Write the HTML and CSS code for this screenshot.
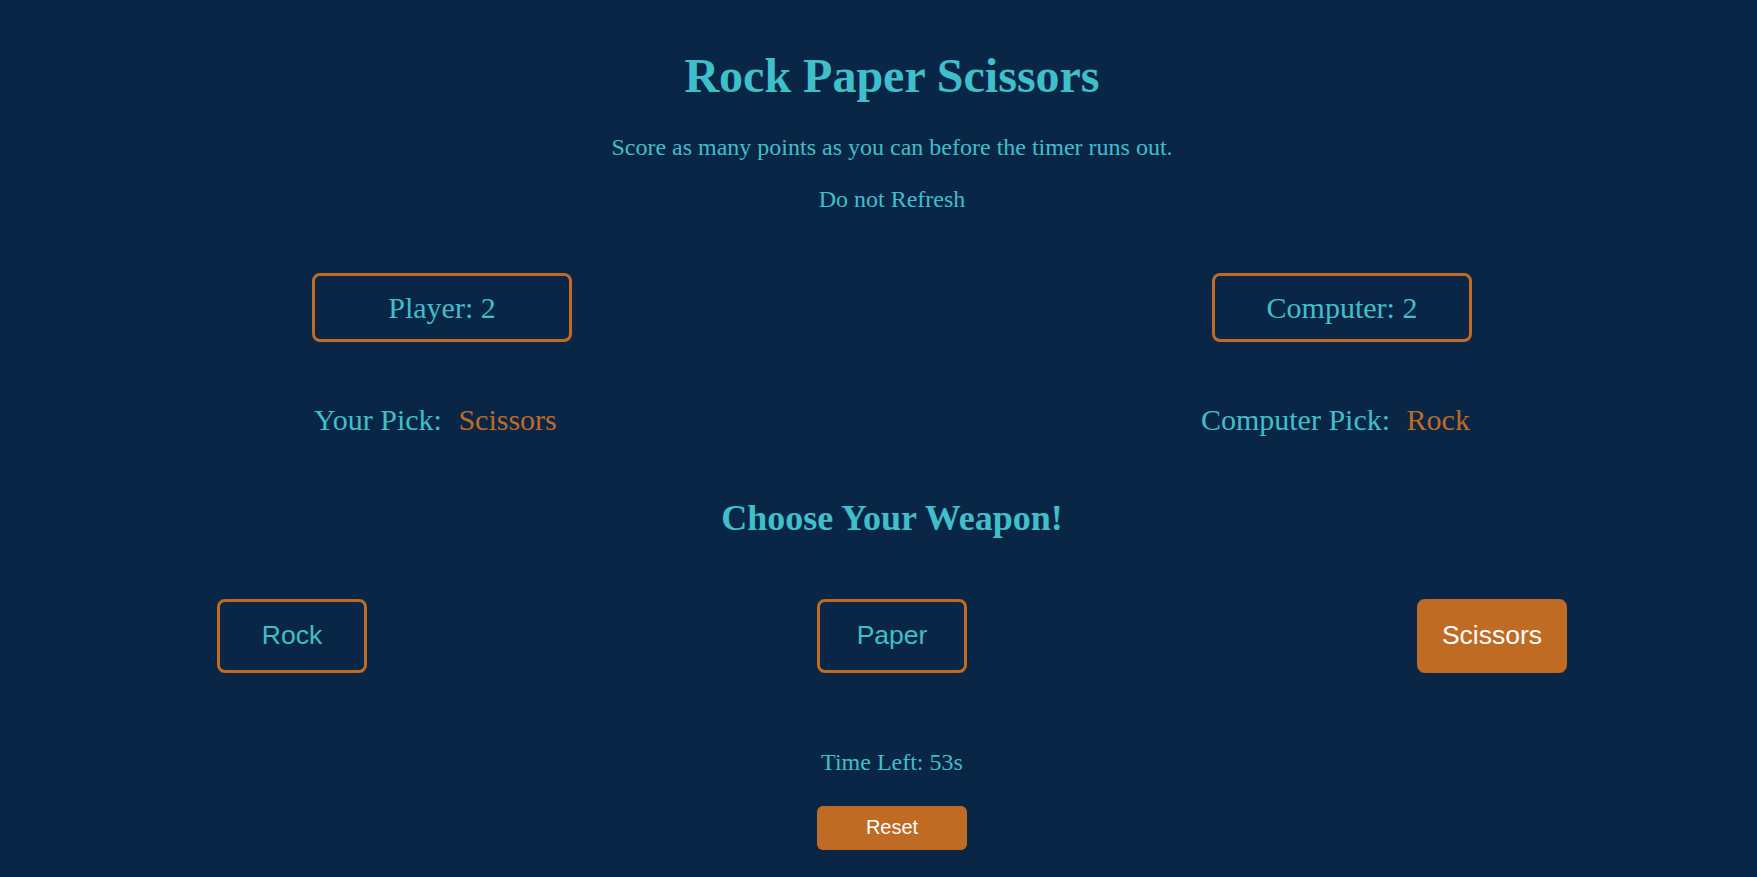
FILE: index.html
```html
<!DOCTYPE html>
<html lang="en">
<head>
<meta charset="utf-8">
<title>Rock Paper Scissors</title>
<link rel="stylesheet" href="styles.css">
</head>
<body>
<main class="page">
  <h1 class="title">Rock Paper Scissors</h1>
  <p class="subtitle">Score as many points as you can before the timer runs out.</p>
  <p class="warning">Do not Refresh</p>

  <section class="row scores">
    <div class="score-box">Player: 2</div>
    <div class="score-box">Computer: 2</div>
  </section>

  <section class="row picks">
    <div class="pick">Your Pick: <span class="pick-value">Scissors</span></div>
    <div class="pick">Computer Pick: <span class="pick-value">Rock</span></div>
  </section>

  <h2 class="choose">Choose Your Weapon!</h2>

  <section class="row weapons">
    <button class="weapon">Rock</button>
    <button class="weapon">Paper</button>
    <button class="weapon selected">Scissors</button>
  </section>

  <p class="timer">Time Left: 53s</p>
  <button class="reset">Reset</button>
</main>
</body>
</html>
```
FILE: styles.css
```css
html, body {
  margin: 0;
  padding: 0;
  overflow: hidden;
  background: #0a2647;
}

body {
  font-family: "Liberation Serif", "Times New Roman", serif;
  color: #3fbfca;
}

.page {
  width: 1800px;
  margin-left: -8px;
  display: flex;
  flex-direction: column;
  align-items: center;
  text-align: center;
}

.title {
  font-size: 48px;
  line-height: 56px;
  font-weight: bold;
  margin: 48px 0 0;
}

.subtitle {
  font-size: 24px;
  line-height: 28px;
  margin: 29px 0 0;
}

.warning {
  font-size: 24px;
  line-height: 28px;
  margin: 24px 0 0;
}

.row {
  align-self: stretch;
  display: flex;
  justify-content: space-around;
  align-items: flex-start;
}

.scores {
  margin-top: 60px;
}

.score-box {
  box-sizing: border-box;
  width: 260px;
  border: 3px solid #bf6b24;
  border-radius: 8px;
  font-size: 30px;
  line-height: 34px;
  padding: 15px 0 14px;
}

.picks {
  margin-top: 61px;
  font-size: 30px;
  line-height: 34px;
}

.pick-value {
  color: #bf6b24;
  margin-left: 9px;
}

.choose {
  font-size: 36px;
  line-height: 40px;
  font-weight: bold;
  margin: 61px 0 0;
}

.weapons {
  margin-top: 61px;
}

.weapon {
  box-sizing: border-box;
  width: 150px;
  border: 3px solid #bf6b24;
  border-radius: 8px;
  background: transparent;
  color: #3fbfca;
  font-family: "Liberation Sans", Arial, sans-serif;
  font-size: 26.5px;
  line-height: 30px;
  padding: 18px 0 20px;
  margin: 0;
}

.weapon.selected {
  background: #bf6b24;
  color: #ffffff;
}

.timer {
  font-size: 24px;
  line-height: 28px;
  margin: 75px 0 0;
}

.reset {
  box-sizing: border-box;
  width: 150px;
  margin-top: 30px;
  border: none;
  border-radius: 6px;
  background: #bf6b24;
  color: #ffffff;
  font-family: "Liberation Sans", Arial, sans-serif;
  font-size: 20px;
  line-height: 24px;
  padding: 9px 0 11px;
}
```
